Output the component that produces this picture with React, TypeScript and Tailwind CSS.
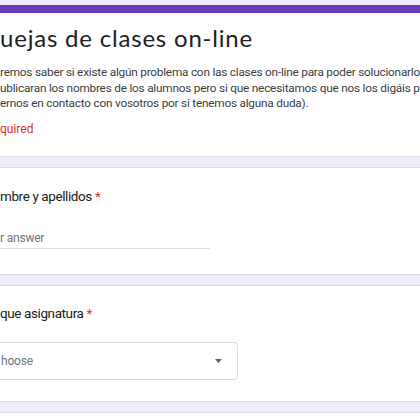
import React from "react";

export default function App() {
  return (
    <div className="w-[420px] h-[420px] overflow-hidden bg-[#f0ebf8] font-['Roboto',sans-serif]">
      <div className="h-[5px]" />
      {/* Card 1 */}
      <div className="bg-white border-b border-[#dadce0]">
        <div className="h-[8px] bg-[#673ab7]" />
        <div className="pt-[9px] pb-[19px]">
          <h1 className="text-[24px] leading-[32px] text-[#202124] font-['Lato',sans-serif] whitespace-nowrap tracking-[0.8px]">
            uejas de clases on-line
          </h1>
          <div className="mt-[11px] text-[11.8px] leading-[15.5px] tracking-[-0.22px] text-[#3c4043] whitespace-nowrap">
            <div>remos saber si existe algún problema con las clases on-line para poder solucionarlo</div>
            <div>ublicaran los nombres de los alumnos pero si que necesitamos que nos los digáis para</div>
            <div>ernos en contacto con vosotros por si tenemos alguna duda).</div>
          </div>
          <div className="mt-[9px] text-[12px] leading-[16px] text-[#d93025]">quired</div>
        </div>
      </div>
      <div className="h-[10px]" />
      {/* Card 2 */}
      <div className="bg-white border-y border-[#dadce0] h-[108px] pt-[18px]">
        <div className="text-[13.5px] leading-[20px] tracking-[-0.4px] text-[#202124] whitespace-nowrap">
          mbre y apellidos <span className="text-[#d93025]">*</span>
        </div>
        <div className="mt-[24px] w-[210px] border-b border-[#dadce0] pb-[2px] text-[12px] leading-[16px] tracking-[-0.2px] text-[#70757a]">
          r answer
        </div>
      </div>
      <div className="h-[10px]" />
      {/* Card 3 */}
      <div className="bg-white border-y border-[#dadce0] h-[117px] pt-[17px]">
        <div className="text-[13.5px] leading-[20px] tracking-[-0.4px] text-[#202124] whitespace-nowrap">
          que asignatura <span className="text-[#d93025]">*</span>
        </div>
        <div className="mt-[19px] w-[248px] h-[38px] -ml-[10px] pl-[10px] pr-[15px] border border-[#dadce0] rounded-[4px] flex items-center justify-between">
          <span className="text-[12px] tracking-[-0.2px] text-[#70757a]">hoose</span>
          <svg width="7" height="4" viewBox="0 0 7 4">
            <path d="M0 0 L7 0 L3.5 4 Z" fill="#5f6368" />
          </svg>
        </div>
      </div>
      <div className="h-[10px]" />
      <div className="bg-white border-t border-[#dadce0] h-[40px]" />
    </div>
  );
}
